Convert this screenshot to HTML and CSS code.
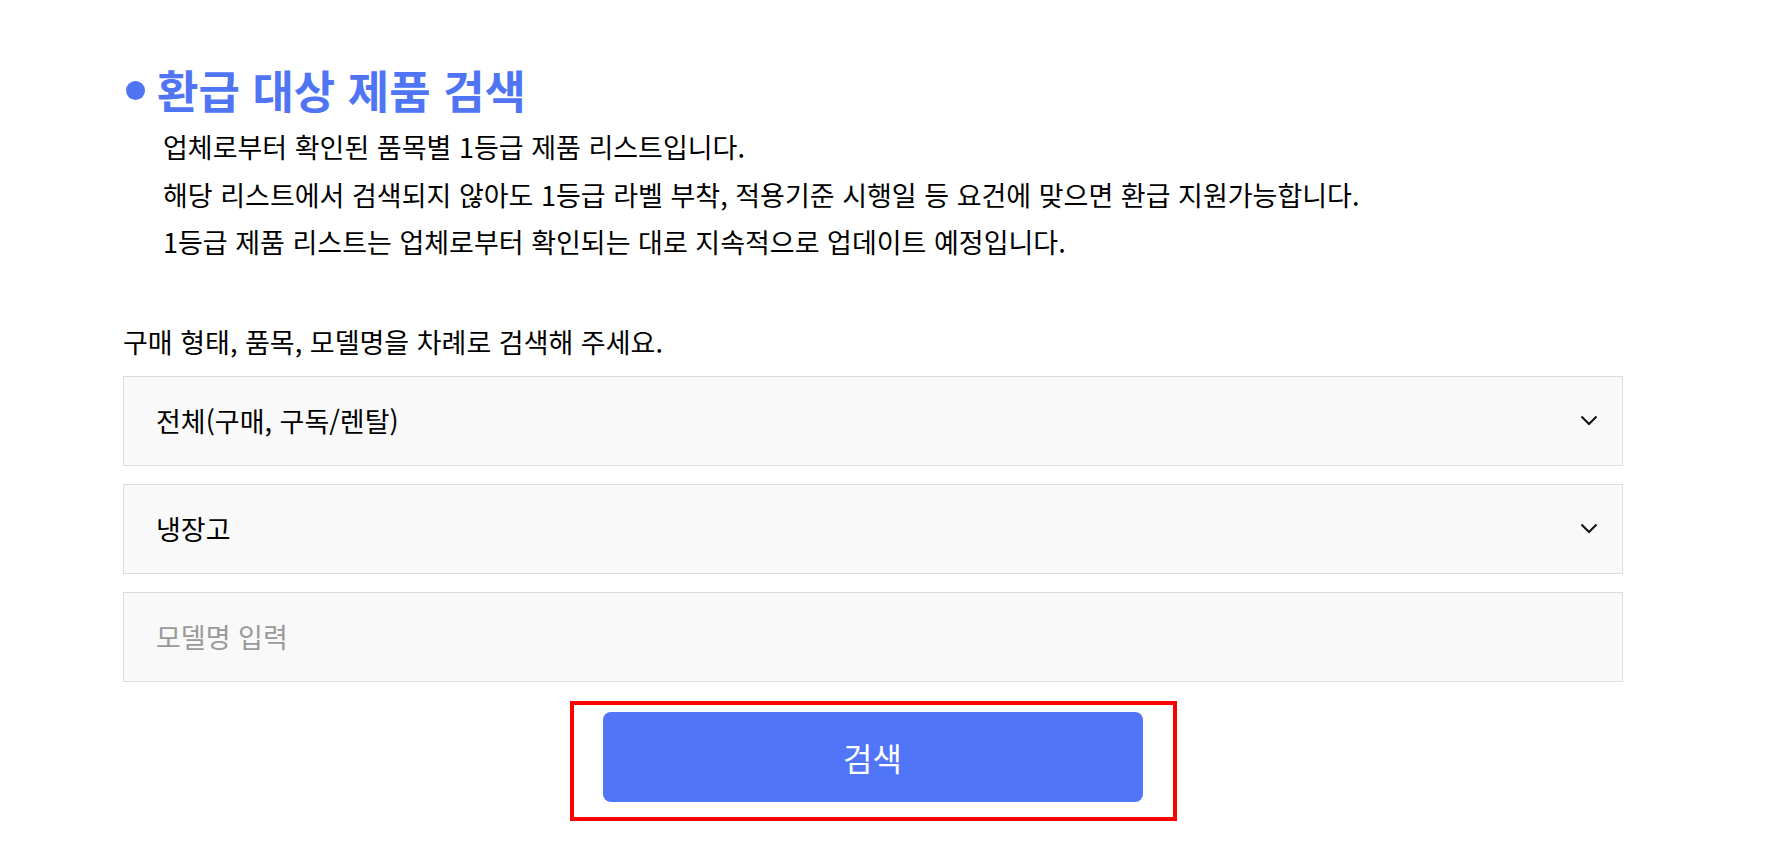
FILE: index.html
```html
<!DOCTYPE html>
<html lang="ko">
<head>
<meta charset="utf-8">
<title>환급 대상 제품 검색</title>
<link rel="stylesheet" href="styles.css">
</head>
<body>
<main class="page">
  <h2 class="title"><span class="dot"></span>환급 대상 제품 검색</h2>
  <div class="desc">
    <p>업체로부터 확인된 품목별 1등급 제품 리스트입니다.</p>
    <p>해당 리스트에서 검색되지 않아도 1등급 라벨 부착, 적용기준 시행일 등 요건에 맞으면 환급 지원가능합니다.</p>
    <p>1등급 제품 리스트는 업체로부터 확인되는 대로 지속적으로 업데이트 예정입니다.</p>
  </div>
  <p class="label">구매 형태, 품목, 모델명을 차례로 검색해 주세요.</p>
  <div class="fields">
    <div class="field select">
      <span>전체(구매, 구독/렌탈)</span>
      <svg class="chev" width="18" height="11" viewBox="0 0 18 11"><path d="M1.5 1.5 L9 9 L16.5 1.5" fill="none" stroke="#111" stroke-width="2"/></svg>
    </div>
    <div class="field select">
      <span>냉장고</span>
      <svg class="chev" width="18" height="11" viewBox="0 0 18 11"><path d="M1.5 1.5 L9 9 L16.5 1.5" fill="none" stroke="#111" stroke-width="2"/></svg>
    </div>
    <div class="field input">
      <span class="placeholder">모델명 입력</span>
    </div>
  </div>
  <div class="btn-wrap">
    <div class="highlight">
      <button class="btn" type="button">검색</button>
    </div>
  </div>
</main>
</body>
</html>
```
FILE: styles.css
```css
html, body {
  margin: 0;
  padding: 0;
  background: #fff;
}
body {
  font-family: "Noto Sans CJK KR", "Noto Sans", sans-serif;
  color: #000;
}
.page {
  width: 1500px;
  padding: 65px 0 0 123px;
}
.title {
  display: flex;
  align-items: center;
  margin: 0;
  height: 50px;
  font-size: 45px;
  line-height: 50px;
  font-weight: 700;
  color: #4f75f5;
}
.dot {
  width: 19px;
  height: 19px;
  border-radius: 50%;
  background: #4f75f5;
  margin: 0 12px 0 3px;
  flex: none;
}
.desc {
  margin-top: 8px;
  padding-left: 40px;
}
.desc p {
  margin: 0;
  font-size: 27px;
  line-height: 47.5px;
}
.label {
  margin: 58px 0 0;
  font-size: 27px;
  line-height: 36px;
}
.fields {
  margin-top: 16px;
  display: flex;
  flex-direction: column;
  gap: 18px;
}
.field {
  height: 88px;
  border: 1px solid #dddddd;
  background: #f9f9f9;
  display: flex;
  align-items: center;
  justify-content: space-between;
  padding: 0 24px 0 32px;
  font-size: 27px;
}
.placeholder {
  color: #999;
}
.btn-wrap {
  display: flex;
  justify-content: center;
  margin-top: 19px;
}
.highlight {
  border: 4px solid #ff0000;
  padding: 7px 30px 15px 29px;
}
.btn {
  display: block;
  width: 540px;
  height: 90px;
  border: 0;
  border-radius: 8px;
  background: #5076f7;
  color: #fff;
  font-family: "Noto Sans CJK KR", "Noto Sans", sans-serif;
  font-size: 32px;
  cursor: pointer;
}
```
